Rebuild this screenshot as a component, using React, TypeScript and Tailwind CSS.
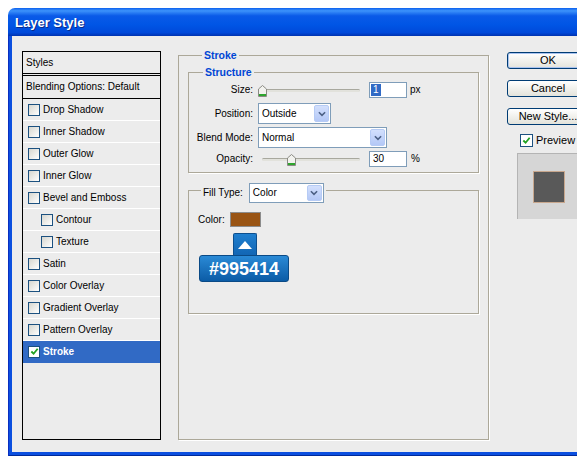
import React from 'react';

// XP-style checkbox, used in the styles list and for Preview
function Check({ checked = false, size = 'w-[12px] h-[12px]' }: { checked?: boolean; size?: string }) {
  return (
    <span
      className={`${size} shrink-0 border border-[#1c5180] flex items-center justify-center ${
        checked ? 'bg-white' : 'bg-linear-to-br from-[#d6d6cf] to-white'
      }`}
    >
      {checked && (
        <svg viewBox="0 0 10 10" className="w-[9px] h-[9px]">
          <path d="M1.5 5 L4 7.5 L8.5 2" fill="none" stroke="#21a121" strokeWidth="2" />
        </svg>
      )}
    </span>
  );
}

// combobox with the light blue drop button
function Select({ value, width, height = 'h-[21px]' }: { value: string; width: string; height?: string }) {
  return (
    <div className={`${width} ${height} border border-[#7f9db9] bg-white flex items-center p-[1px]`}>
      <span className="flex-1 pl-[2px] text-[10px] leading-none text-black">{value}</span>
      <span className="w-[15px] h-full rounded-[2px] border border-[#b6cbf5] bg-linear-to-b from-[#d3e0fd] to-[#b4c8f6] flex items-center justify-center">
        <svg viewBox="0 0 9 6" className="w-[8px] h-[6px]">
          <path d="M1 1 L4.5 4.5 L8 1" fill="none" stroke="#4d6185" strokeWidth="1.8" />
        </svg>
      </span>
    </div>
  );
}

// slider track + thumb; thumb sits over the track
function Slider({ thumbLeft }: { thumbLeft: number }) {
  return (
    <div className="relative w-[102px] h-[12px]">
      <div className="absolute left-[4px] right-0 top-[5px] h-[3px] rounded-full border-t border-[#a8a89e] bg-[#e2e2dc]" />
      <svg viewBox="0 0 9 12" className="absolute top-[1px] w-[9px] h-[12px]" style={{ left: thumbLeft }}>
        <path d="M0.5 4 L4.5 0.5 L8.5 4 V11.5 H0.5 Z" fill="#f2f2ee" stroke="#8a8a84" />
        <rect x="1" y="9" width="7" height="2" fill="#2ea52e" />
      </svg>
    </div>
  );
}

const items = [
  { name: 'Drop Shadow' },
  { name: 'Inner Shadow' },
  { name: 'Outer Glow' },
  { name: 'Inner Glow' },
  { name: 'Bevel and Emboss' },
  { name: 'Contour', indent: true },
  { name: 'Texture', indent: true },
  { name: 'Satin' },
  { name: 'Color Overlay' },
  { name: 'Gradient Overlay' },
  { name: 'Pattern Overlay' },
  { name: 'Stroke', selected: true },
];

export default function App() {
  return (
    <div className="w-[577px] h-[460px] overflow-hidden bg-white pl-2 pt-2 font-['Liberation_Sans',Arial,sans-serif]">
      <div className="w-[620px] rounded-tl-[7px] overflow-hidden">
        {/* title bar */}
        <div className="h-[28px] flex items-center pl-[7px] bg-[linear-gradient(to_bottom,#0b5fee_0%,#3d93fb_10%,#0a5ae8_28%,#0055e5_60%,#0049da_88%,#0033b0_100%)]">
          <span className="text-white font-bold text-[13px] leading-none [text-shadow:1px_1px_0_#0a2a8a]">Layer Style</span>
        </div>

        {/* frame: blue left and bottom border */}
        <div className="h-[420px] bg-[#0b4fdf] pl-1 pb-1 shadow-[inset_1px_0_0_#0a2fc0,inset_0_-1px_0_#002a9a]">
          <div className="h-full bg-[#ececec] flex items-start text-black">
            {/* styles list */}
            <div className="ml-[10px] mt-[15px] w-[139px] h-[389px] border border-black flex flex-col text-[10px] leading-none">
              <div className="h-[21px] flex items-center pl-[3px]">Styles</div>
              <div className="h-[3px] border-y border-black" />
              <div className="h-[23px] flex items-center pl-[3px] border-b border-black">Blending Options: Default</div>
              {items.map((it) => (
                <div
                  key={it.name}
                  className={`h-[22px] flex items-center gap-[3px] border-b ${
                    it.selected ? 'bg-[#316ac5] border-[#316ac5] text-white font-bold' : 'border-white'
                  } ${it.indent ? 'pl-[18px]' : 'pl-[5px]'}`}
                >
                  <Check checked={it.selected} />
                  <span>{it.name}</span>
                </div>
              ))}
            </div>

            {/* Stroke group */}
            <fieldset className="ml-[17px] mt-[13px] w-[311px] h-[391px] border border-[#aca899] px-[9px] shadow-[1px_1px_0_#fff]">
              <legend className="ml-[14px] px-[2px] text-[10.5px] leading-[13px] font-bold text-[#0046d5]">Stroke</legend>

              <fieldset className="mt-[4px] w-[291px] border border-[#aca899] pb-[5px] shadow-[1px_1px_0_#fff]">
                <legend className="ml-[14px] px-[2px] text-[10.5px] leading-[13px] font-bold text-[#0046d5]">Structure</legend>

                <div className="h-[22px] flex items-center text-[10px] leading-none">
                  <span className="w-[64px] text-right">Size:</span>
                  <div className="ml-[5px]">
                    <Slider thumbLeft={0} />
                  </div>
                  <div className="ml-[9px] w-[38px] h-[16px] border border-[#7f9db9] bg-white flex items-center pl-[1px]">
                    <span className="bg-[#316ac5] text-white px-[2px] h-[12px] flex items-center">1</span>
                  </div>
                  <span className="ml-[3px]">px</span>
                </div>

                <div className="mt-[2px] h-[21px] flex items-center text-[10px] leading-none">
                  <span className="w-[64px] text-right">Position:</span>
                  <div className="ml-[5px]">
                    <Select value="Outside" width="w-[73px]" />
                  </div>
                </div>

                <div className="mt-[3px] h-[21px] flex items-center text-[10px] leading-none">
                  <span className="w-[64px] text-right">Blend Mode:</span>
                  <div className="ml-[5px]">
                    <Select value="Normal" width="w-[129px]" />
                  </div>
                </div>

                <div className="mt-[3px] h-[16px] flex items-center text-[10px] leading-none">
                  <span className="w-[64px] text-right">Opacity:</span>
                  <div className="ml-[5px]">
                    <Slider thumbLeft={29} />
                  </div>
                  <div className="ml-[9px] w-[38px] h-[16px] border border-[#7f9db9] bg-white flex items-center pl-[3px]">
                    30
                  </div>
                  <span className="ml-[4px]">%</span>
                </div>
              </fieldset>

              <fieldset className="mt-[4px] w-[291px] h-[137px] border border-[#aca899] shadow-[1px_1px_0_#fff]">
                <legend className="ml-[12px] px-[2px] pt-[6px]">
                  <div className="flex items-center text-[10px] leading-none">
                    <span>Fill Type:</span>
                    <div className="ml-[6px]">
                      <Select value="Color" width="w-[75px]" height="h-[20px]" />
                    </div>
                  </div>
                </legend>

                <div className="mt-[9px] flex items-center pl-[9px] text-[10px] leading-none">
                  <span className="w-[32px]">Color:</span>
                  <span className="w-[31px] h-[15px] border border-[#8c8c8c] bg-[#995414]" />
                </div>

                {/* hex value callout */}
                <div className="mt-[6px] flex flex-col items-start">
                  <div className="ml-[44px] w-[24px] h-[22px] rounded-t-[2px] border border-b-0 border-[#0c4f8e] bg-linear-to-b from-[#1f7fcf] to-[#1266b4] flex items-center justify-center">
                    <svg viewBox="0 0 14 8" className="w-[14px] h-[8px]">
                      <path d="M0 8 L7 0 L14 8 Z" fill="#fff" />
                    </svg>
                  </div>
                  <div className="ml-[10px] w-[90px] h-[27px] rounded-[3px] border border-[#0a4a86] bg-linear-to-b from-[#2a8ad6] to-[#0b5ca6] flex items-center justify-center text-white font-bold text-[18px] leading-none">
                    #995414
                  </div>
                </div>
              </fieldset>
            </fieldset>

            {/* buttons and preview */}
            <div className="ml-[18px] mt-[16px] flex flex-col items-start text-[11px] leading-none">
              <button className="w-[82px] h-[17px] rounded-[3px] border border-[#003c74] bg-linear-to-b from-white to-[#e3e3db] shadow-[inset_0_0_0_1px_#a9c3ef] flex items-center justify-center">
                OK
              </button>
              <button className="mt-[11px] w-[82px] h-[17px] rounded-[3px] border border-[#003c74] bg-linear-to-b from-white to-[#e3e3db] flex items-center justify-center">
                Cancel
              </button>
              <button className="mt-[11px] w-[82px] h-[17px] rounded-[3px] border border-[#003c74] bg-linear-to-b from-white to-[#e3e3db] flex items-center justify-center whitespace-nowrap">
                New Style...
              </button>
              <div className="mt-[9px] ml-[13px] flex items-center gap-[3px]">
                <Check checked size="w-[13px] h-[13px]" />
                <span>Preview</span>
              </div>
              <div className="mt-[6px] ml-[10px] w-[80px] h-[66px] bg-[#d6d6d6] border-l border-t border-[#b4b4b4] pl-[15px] pt-[17px]">
                <div className="w-[32px] h-[32px] bg-[#595959] border border-[#c8a78d]" />
              </div>
            </div>
          </div>
        </div>
      </div>
    </div>
  );
}
